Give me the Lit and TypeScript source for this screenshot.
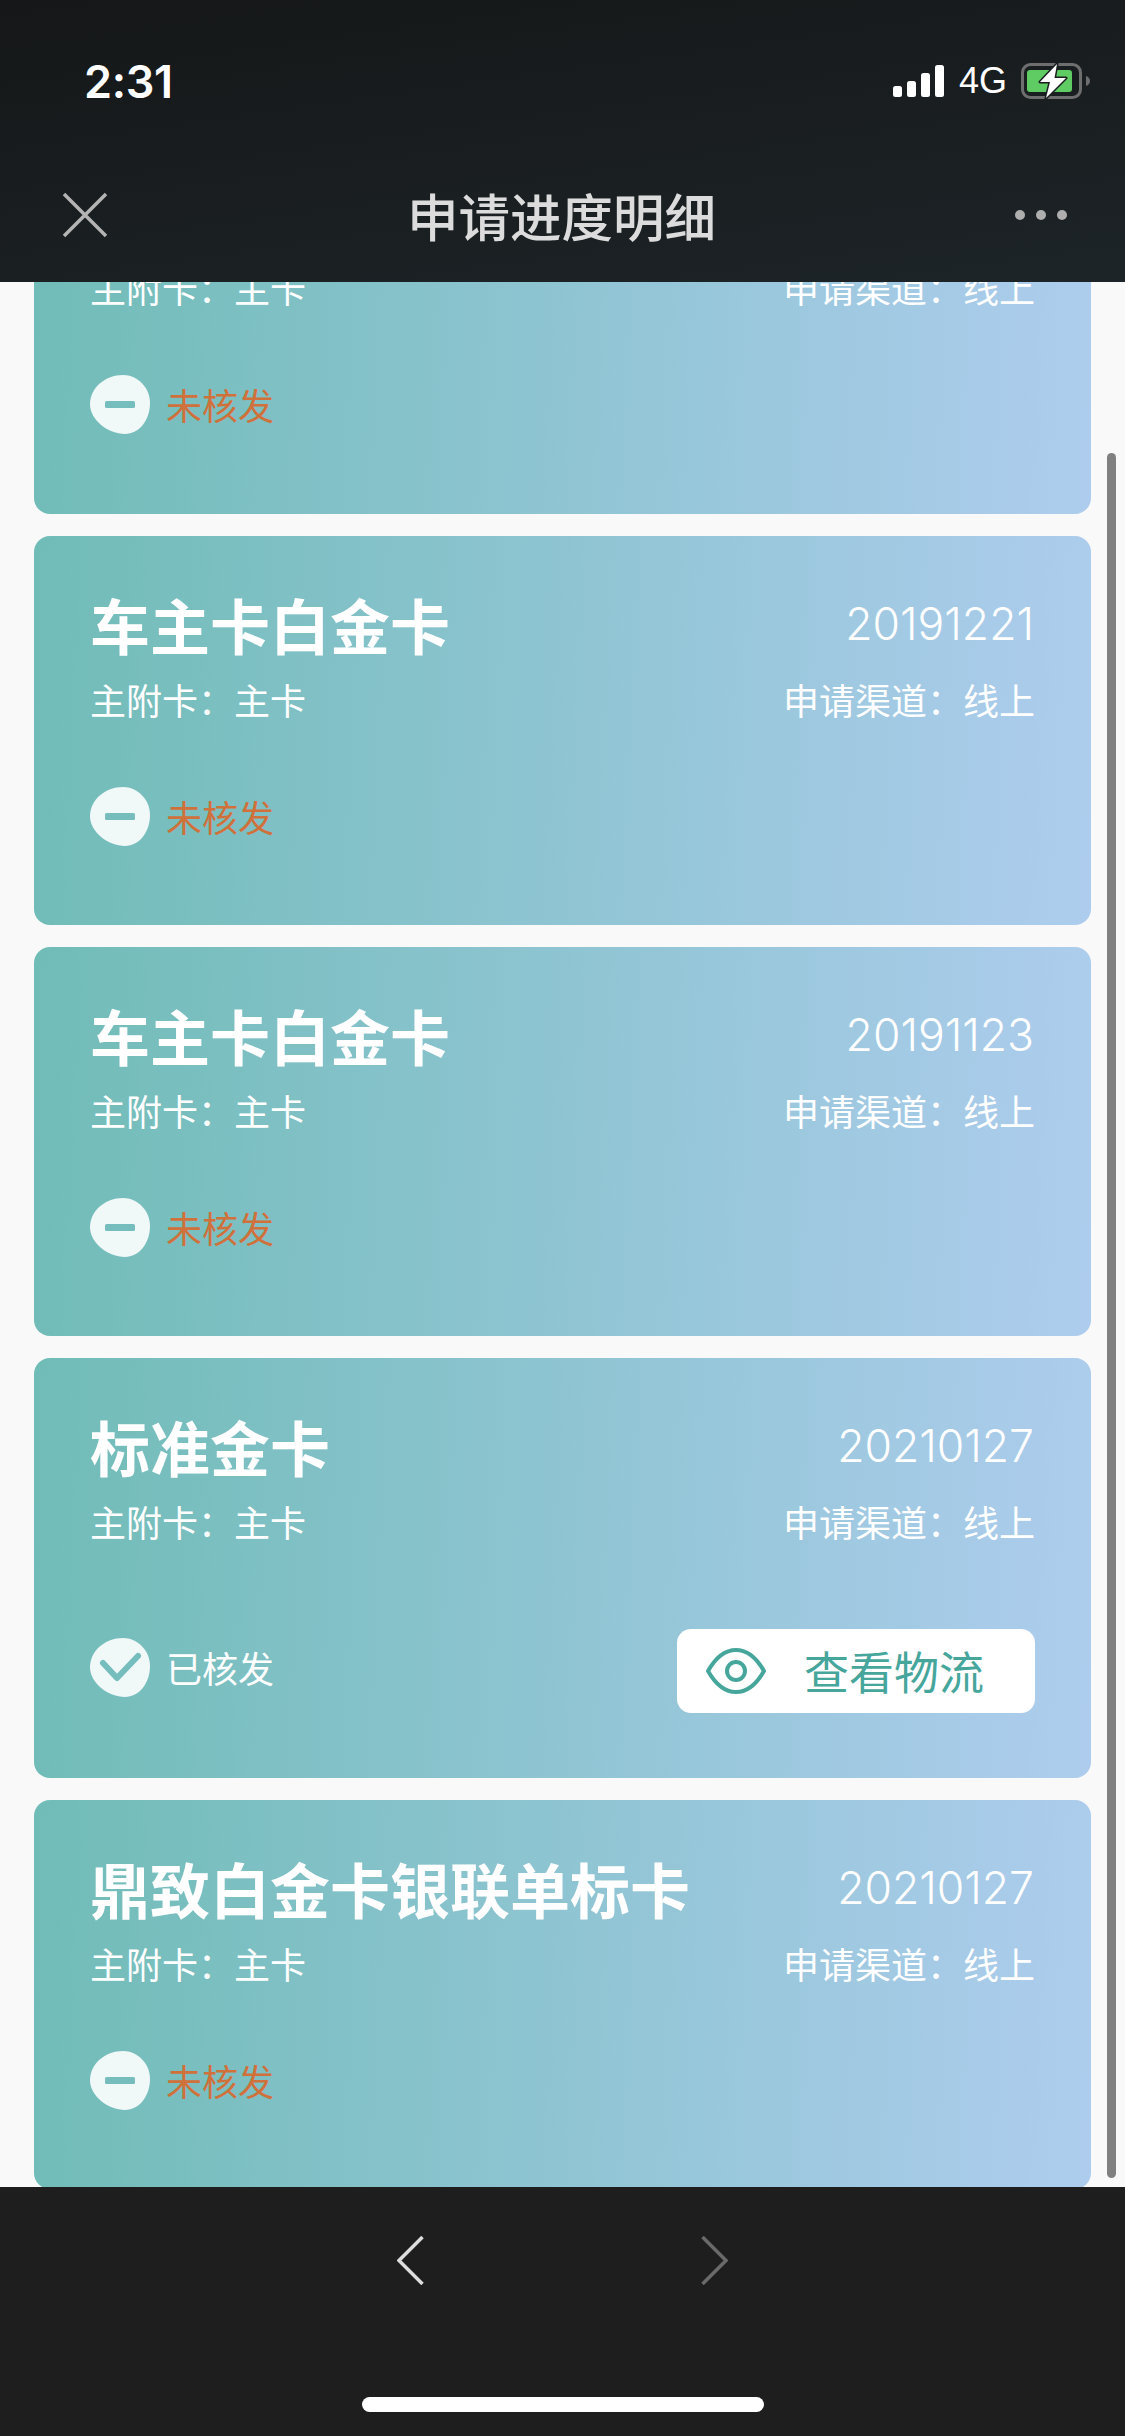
import { LitElement, html, css, svg } from "lit";
import { customElement } from "lit/decorators.js";

interface CardData { title: string; date: string; issued: boolean; }

const cards: CardData[] = [
  { title: "车主卡白金卡", date: "20191221", issued: false },
  { title: "车主卡白金卡", date: "20191221", issued: false },
  { title: "车主卡白金卡", date: "20191123", issued: false },
  { title: "标准金卡", date: "20210127", issued: true },
  { title: "鼎致白金卡银联单标卡", date: "20210127", issued: false },
];

const BLOB = "M33 0C48 0 60 13 60 28C60 45 49 59 35 59C18 59 0 45 0 29C0 13 15 0 33 0Z";

@customElement("app-root")
export class AppRoot extends LitElement {
  static styles = css`
    :host { display: flex; flex-direction: column; width: 1125px; height: 2436px; background: #f9f9f9;
      font-family: "Noto Sans CJK SC", "Noto Sans", sans-serif; color: #fff; overflow: hidden; }
    .header { height: 282px; flex: none; background: linear-gradient(172deg, #151718 0%, #1d2427 100%); display: flex; flex-direction: column; position: relative; z-index: 1; }
    .status { height: 150px; padding: 55px 34px 0 84px; box-sizing: border-box; display: flex; justify-content: space-between; align-items: flex-start; }
    .time { font-family: Inter, sans-serif; font-size: 45px; line-height: 54px; font-weight: 600; letter-spacing: -0.3px; }
    .sys { display: flex; align-items: center; padding-top: 8px; }
    .sys-4g { font-family: "Liberation Sans", sans-serif; font-size: 36px; line-height: 36px; margin: 0 14px 0 15px; }
    .nav { flex: 1; display: grid; grid-template-columns: 1fr auto 1fr; align-items: center; padding: 0 59px 2px 57px; }
    .close { margin-left: 5px; }
    .nav-title { font-size: 51.5px; line-height: 60px; font-weight: 500; color: #dcdcdc; }
    .dots { justify-self: end; display: flex; gap: 11px; margin-right: -1px; }
    .dot { width: 10px; height: 10px; border-radius: 50%; background: #aeaeae; }
    .main { flex: 1; min-height: 0; overflow: hidden; position: relative; }
    .list { margin-top: -157.6px; padding: 0 34px; display: flex; flex-direction: column; gap: 22px; }
    .card { height: 389.3px; box-sizing: border-box; padding: 50px 56px 0 56px; border-radius: 16px; flex: none;
      background: linear-gradient(93deg, #70bcb7 0%, #aecdee 100%); }
    .card.action { height: 419.5px; }
    .row { display: flex; justify-content: space-between; align-items: center; }
    .title { font-size: 60px; line-height: 76px; font-weight: 700; }
    .date { font-family: Inter, sans-serif; font-size: 44.5px; line-height: 76px; font-weight: 300; margin-right: 1px; }
    .subs { margin-top: 15px; font-size: 36px; line-height: 44px; }
    .state-row { margin-top: 66px; height: 60px; display: flex; justify-content: space-between; align-items: center; }
    .card.action .state-row { margin-top: 86px; height: 84px; align-items: flex-start; }
    .state { display: flex; align-items: center; gap: 16px; font-size: 36px; line-height: 60px; color: #d0703a; }
    .state span { margin-top: -2px; }
    .card.action .state { color: #fff; margin-top: 9px; }
    .blob { width: 60px; height: 60px; flex: none; display: block; }
    .btn { width: 358px; height: 84px; box-sizing: border-box; padding-left: 29px; background: #fff; border-radius: 14px; display: flex; align-items: center; gap: 38px;
      font-size: 45px; line-height: 84px; color: #46a69c; }
    .scrollbar { position: absolute; right: 9px; top: 171px; bottom: 9px; width: 9px; border-radius: 5px; background: #808080; }
    .footer { height: 249px; flex: none; background: #1e1e1e; display: flex; flex-direction: column; align-items: center; }
    .arrows { width: 100%; box-sizing: border-box; padding: 49px 0 0 397px; display: flex; gap: 277px; }
    .home { margin-top: 112px; width: 402px; height: 15px; border-radius: 8px; background: #fff; }
    svg { display: block; }
  `;

  private blob(issued: boolean) {
    const mark = issued
      ? svg`<path d="M13 25L27 40L48 18" fill="none" stroke="#76bdbd" stroke-width="6" stroke-linecap="round" stroke-linejoin="round"/>`
      : svg`<rect x="15" y="26" width="30" height="7" rx="1.5" fill="#76bdbd"/>`;
    return html`<svg class="blob" viewBox="0 0 60 60"><path d="${BLOB}" fill="#f1f8f8"/>${mark}</svg>`;
  }

  private card(c: CardData) {
    return html`
      <section class="card ${c.issued ? "action" : ""}">
        <div class="row"><div class="title">${c.title}</div><div class="date">${c.date}</div></div>
        <div class="row subs"><div>主附卡：主卡</div><div>申请渠道：线上</div></div>
        <div class="state-row">
          <div class="state">${this.blob(c.issued)}<span>${c.issued ? "已核发" : "未核发"}</span></div>
          ${c.issued ? html`<div class="btn">
            <svg width="60" height="46" viewBox="0 0 60 46" fill="none" stroke="#46a69c" stroke-width="4">
              <path d="M2 23C10 9 19 2 30 2C41 2 50 9 58 23C50 37 41 44 30 44C19 44 10 37 2 23Z"/>
              <circle cx="30" cy="23" r="9"/>
            </svg>
            <span>查看物流</span></div>` : ""}
        </div>
      </section>`;
  }

  render() {
    return html`
      <header class="header">
        <div class="status">
          <div class="time">2:31</div>
          <div class="sys">
            <svg width="51" height="32" viewBox="0 0 51 32" fill="#fff">
              <rect x="0" y="21" width="9" height="11" rx="2.5"/>
              <rect x="14" y="16" width="9" height="16" rx="2.5"/>
              <rect x="28" y="8" width="9" height="24" rx="2.5"/>
              <rect x="42" y="0" width="9" height="32" rx="2.5"/>
            </svg>
            <span class="sys-4g">4G</span>
            <svg width="70" height="36" viewBox="0 0 70 36">
              <rect x="1.5" y="1.5" width="58" height="33" rx="8" fill="none" stroke="#6e6e6e" stroke-width="3"/>
              <rect x="6" y="7" width="45" height="22" rx="3" fill="#5fcb63"/>
              <path d="M65 13C67.500 14 69 15.500 69 18C69 20.500 67.500 22 65 23Z" fill="#6e6e6e"/>
              <path d="M36 1L19 19H29L25 35L45 15H33.500Z" fill="#fff" stroke="#1b1f21" stroke-width="3" paint-order="stroke" stroke-linejoin="round"/>
            </svg>
          </div>
        </div>
        <div class="nav">
          <svg class="close" width="46" height="46" viewBox="0 0 46 46" stroke="#b4b4b4" stroke-width="3.500" fill="none"><path d="M2 2L44 44M44 2L2 44"/></svg>
          <div class="nav-title">申请进度明细</div>
          <div class="dots"><i class="dot"></i><i class="dot"></i><i class="dot"></i></div>
        </div>
      </header>
      <main class="main">
        <div class="list">${cards.map((c) => this.card(c))}</div>
        <div class="scrollbar"></div>
      </main>
      <footer class="footer">
        <div class="arrows">
          <svg width="27" height="49" viewBox="0 0 27 49" fill="none" stroke="#dedede" stroke-width="3.500"><path d="M25.500 1L2 24.500L25.500 48"/></svg>
          <svg width="27" height="49" viewBox="0 0 27 49" fill="none" stroke="#6a6a6a" stroke-width="3.500"><path d="M1.500 1L25 24.500L1.500 48"/></svg>
        </div>
        <div class="home"></div>
      </footer>
    `;
  }
}
